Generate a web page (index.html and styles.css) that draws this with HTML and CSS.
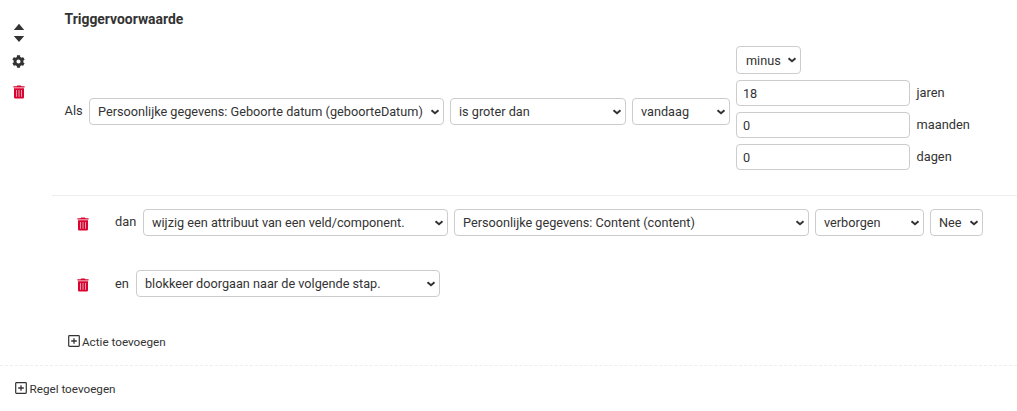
FILE: index.html
```html
<!DOCTYPE html>
<html lang="nl">
<head>
<meta charset="utf-8">
<title>Logica</title>
<link rel="stylesheet" href="styles.css">
</head>
<body>
<svg class="defs" width="0" height="0">
  <symbol id="trash" viewBox="0 0 12 14"><path fill="currentColor" d="M.4 1.2H3.6L4.2.4H7.8L8.4 1.2H11.6V2.5H.4z"/><path fill="currentColor" fill-rule="evenodd" d="M1 3.2H11V12.2Q11 13.5 9.7 13.5H2.3Q1 13.5 1 12.2zM3.2 5V11.7H3.8V5zM5.7 5V11.7H6.3V5zM8.2 5V11.7H8.8V5z"/></symbol>
  <symbol id="plus" viewBox="0 0 12 12"><rect x=".7" y=".7" width="10.6" height="10.6" rx=".7" fill="none" stroke="currentColor" stroke-width="1.2"/><path d="M6 3.2V8.8M3.2 6H8.8" stroke="currentColor" stroke-width="1.3"/></symbol>
</svg>
<main class="rule">
  <div class="rule-actions">
    <svg class="sort" viewBox="0 0 12 20"><path d="M6 .8 11.200 6.900H.8zM.8 13H11.200L6 19z"/></svg>
    <svg class="gear" viewBox="0 0 512 512"><path d="M487.4 315.7l-42.6-24.6c4.3-23.2 4.3-47 0-70.2l42.6-24.6c4.9-2.8 7.1-8.6 5.5-14-11.1-35.6-30-67.8-54.7-94.6-3.8-4.1-10-5.1-14.8-2.3L380.8 110c-17.9-15.4-38.5-27.3-60.8-35.1V25.8c0-5.6-3.9-10.5-9.4-11.7-36.7-8.2-74.3-7.8-109.2 0-5.5 1.2-9.4 6.1-9.4 11.7V75c-22.2 7.9-42.8 19.8-60.8 35.1L88.7 85.5c-4.9-2.8-11-1.9-14.8 2.3-24.7 26.7-43.6 58.9-54.7 94.6-1.7 5.4.6 11.2 5.5 14L67.3 221c-4.3 23.2-4.3 47 0 70.2l-42.6 24.6c-4.9 2.8-7.1 8.6-5.5 14 11.1 35.6 30 67.8 54.7 94.6 3.8 4.1 10 5.1 14.8 2.3l42.6-24.6c17.9 15.4 38.5 27.3 60.8 35.1v49.2c0 5.6 3.9 10.5 9.4 11.7 36.7 8.2 74.3 7.8 109.2 0 5.5-1.2 9.4-6.1 9.4-11.7v-49.2c22.2-7.9 42.8-19.8 60.8-35.1l42.6 24.6c4.9 2.8 11 1.9 14.8-2.3 24.7-26.7 43.6-58.9 54.7-94.6 1.5-5.5-.7-11.3-5.6-14.1zM256 336c-44.1 0-80-35.9-80-80s35.9-80 80-80 80 35.9 80 80-35.9 80-80 80z"/></svg>
    <svg class="trash"><use href="#trash"/></svg>
  </div>
  <div class="rule-body">
    <section class="trigger">
      <h3>Triggervoorwaarde</h3>
      <div class="line">
        <span class="label">Als</span>
        <select class="w-component"><option>Persoonlijke gegevens: Geboorte datum (geboorteDatum)</option></select>
        <select class="w-operator"><option>is groter dan</option></select>
        <select class="w-operand"><option>vandaag</option></select>
        <div class="delta">
          <select class="w-minus"><option>minus</option></select>
          <label><input type="text" value="18">jaren</label>
          <label><input type="text" value="0">maanden</label>
          <label><input type="text" value="0">dagen</label>
        </div>
      </div>
    </section>
    <section class="actions">
      <div class="action">
        <svg class="trash"><use href="#trash"/></svg>
        <span class="label dan">dan</span>
        <select class="w-type"><option>wijzig een attribuut van een veld/component.</option></select>
        <select class="w-component"><option>Persoonlijke gegevens: Content (content)</option></select>
        <select class="w-property"><option>verborgen</option></select>
        <select class="w-value"><option>Nee</option></select>
      </div>
      <div class="action">
        <svg class="trash"><use href="#trash"/></svg>
        <span class="label en">en</span>
        <select class="w-block"><option>blokkeer doorgaan naar de volgende stap.</option></select>
      </div>
      <a class="add"><svg><use href="#plus"/></svg>Actie toevoegen</a>
    </section>
  </div>
</main>
<a class="add add-rule"><svg><use href="#plus"/></svg>Regel toevoegen</a>
</body>
</html>
```
FILE: styles.css
```css
* { box-sizing: border-box; }
body { margin: 0; background: #fff; color: #333; font: 12.8px/16px Roboto, sans-serif; overflow: hidden; }
.defs { position: absolute; }
svg { display: block; flex: none; fill: currentColor; }
.rule { display: flex; height: 366px; border-bottom: 1px dashed #eee; }
.rule-actions { width: 52px; flex: none; padding: 23px 0 0 13px; color: #333; }
.sort { width: 12px; height: 20px; }
.gear { width: 13px; height: 13px; margin: 12px 0 0 -1px; }
.trash { width: 12px; height: 14px; color: #d9042f; }
.rule-actions .trash { margin-top: 17px; }
.rule-body { flex: 1; }
.trigger { height: 196px; padding: 11px 0 0 12.6px; border-bottom: 1px solid #eee; }
h3 { margin: 0; font-size: 13.9px; line-height: 16px; font-weight: 700; }
.line { display: flex; align-items: center; gap: 6px; margin-top: 19px; height: 124px; }
.line > select { margin-top: 7px; }
.line .label { width: 18.4px; margin-top: 6px; }
.delta { display: flex; flex-direction: column; align-items: flex-start; gap: 6px; }
.delta label { display: flex; align-items: center; gap: 6.5px; }
select, input { margin: 0; border: 1px solid #ccc; border-radius: 4px; background-color: #fff; color: #333; font: 12.7px Roboto, sans-serif; }
select {
  appearance: none; height: 27px; padding: 4px 8px; flex: none;
  background-image: url("data:image/svg+xml,%3Csvg xmlns='http://www.w3.org/2000/svg' viewBox='0 0 10 6'%3E%3Cpath d='M1.5 1.3 5 4.3 8.5 1.3' fill='none' stroke='%23333' stroke-width='2'/%3E%3C/svg%3E");
  background-repeat: no-repeat; background-size: 10px 6px; background-position: right 3px center;
}
input { width: 174px; height: 26px; padding: 4px 6px; }
.w-component { width: 355px; }
.w-operator { width: 176px; }
.w-operand { width: 98px; }
.w-minus { width: 65px; height: 28px; padding-left: 9px; }
.w-type { width: 305px; }
.w-property { width: 109px; }
.w-value { width: 53px; }
.w-block { width: 304px; }
.actions { padding: 13px 0 0 16px; }
.action { display: flex; align-items: center; gap: 6px; height: 27px; margin-bottom: 34px; padding-left: 9px; }
.action .trash { margin: 3px 20px 0 0; }
.action .label { margin-top: -1px; }
.action .en { margin-top: 1px; }
.dan { width: 22px; }
.en { width: 15px; }
.add { display: flex; align-items: center; gap: 2.5px; font-size: 11.7px; line-height: 14px; }
.actions .add { margin: 38px 0 0 -.5px; }
.add svg { width: 12px; height: 12px; margin-top: -2px; }
.add-rule { margin: 16px 0 0 15px; }
```
